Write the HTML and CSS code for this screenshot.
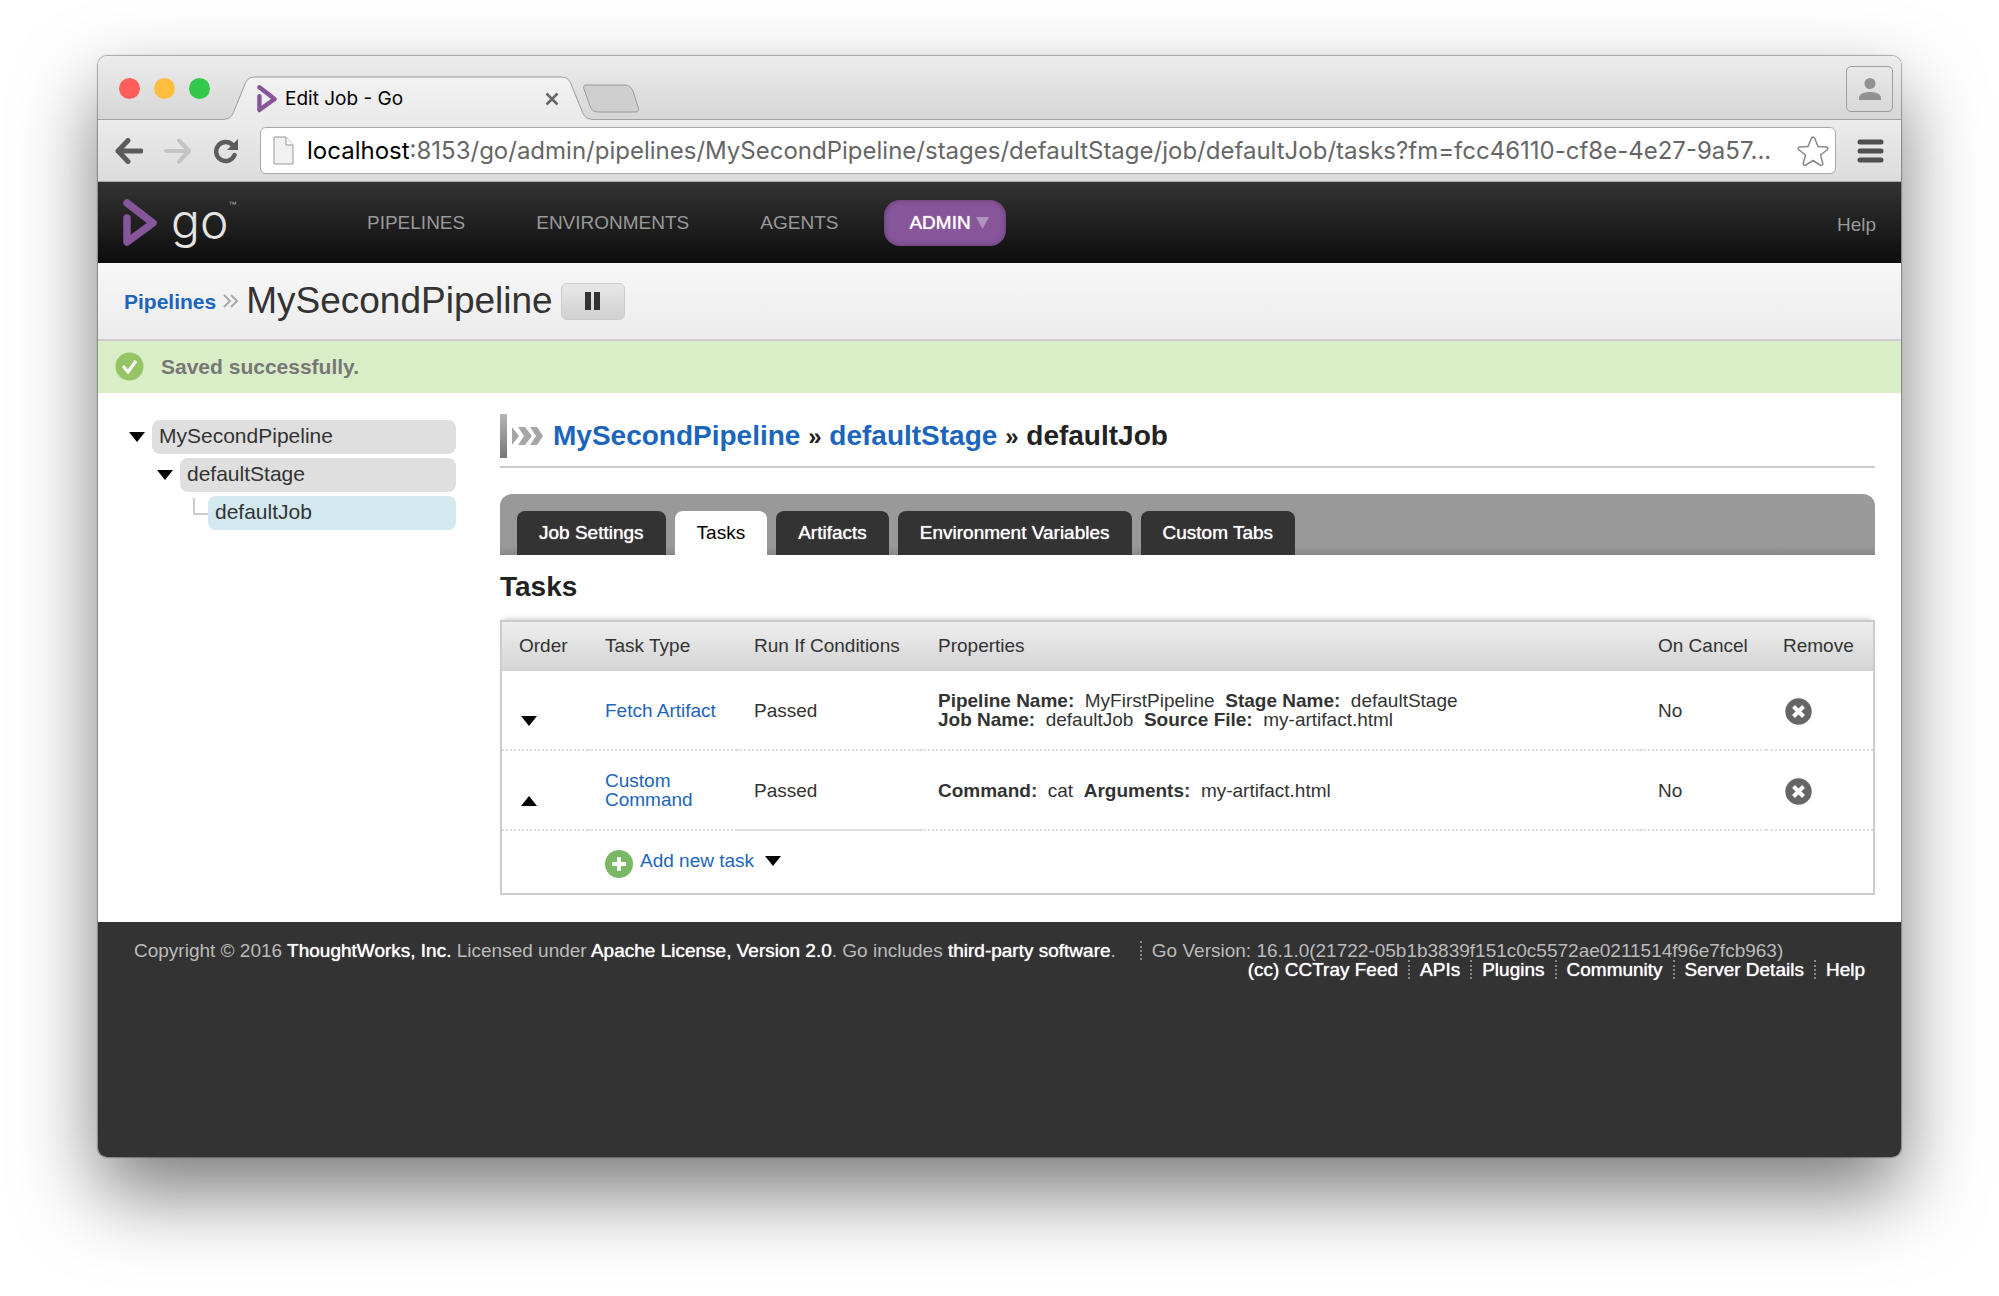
FILE: index.html
```html
<!DOCTYPE html>
<html lang="en">
<head>
<meta charset="utf-8">
<title>Edit Job - Go</title>
<link rel="stylesheet" href="styles.css">
</head>
<body>
<svg class="defs" aria-hidden="true">
  <defs>
    <symbol id="go-mark" viewBox="0 0 34 48"><path d="M4 4 30 24 4 43V19" fill="none" stroke="#87559a" stroke-width="7.500" stroke-linejoin="round" stroke-linecap="round"/></symbol>
    <symbol id="down" viewBox="0 0 16 10"><path d="M0 0h16L8 10z"/></symbol>
    <symbol id="up" viewBox="0 0 16 10"><path d="M0 10h16L8 0z"/></symbol>
    <symbol id="remove" viewBox="0 0 27 27"><circle cx="13.500" cy="13.500" r="13.200" fill="#666"/><path d="M8.500 8.500l10 10M18.500 8.500l-10 10" stroke="#fff" stroke-width="4"/></symbol>
  </defs>
</svg>
<div class="window">
  <div class="tabstrip">
    <div class="lights"><i class="light red"></i><i class="light amber"></i><i class="light green"></i></div>
    <div class="browser-tab">
      <svg class="tab-shape" viewBox="0 0 366 44"><defs><linearGradient id="tabfill" x2="0" y2="1"><stop stop-color="#f2f2f2"/><stop offset="1" stop-color="#eaeaea"/></linearGradient></defs><path d="M0 43c5 0 7-3 9-8L20 8c2-5 5-7 10-7h306c5 0 8 2 10 7l11 27c2 5 4 8 9 8v1H0z" fill="url(#tabfill)"/><path d="M0 43c5 0 7-3 9-8L20 8c2-5 5-7 10-7h306c5 0 8 2 10 7l11 27c2 5 4 8 9 8" fill="none" stroke="#9c9c9c"/></svg>
      <svg class="favicon"><use href="#go-mark"/></svg>
      <span class="tab-title">Edit Job - Go</span>
      <button class="plain tab-close" aria-label="Close tab"><svg width="14" height="14" viewBox="0 0 14 14"><path d="M1.500 1.500l11 11M12.500 1.500l-11 11" stroke="#666" stroke-width="2.500"/></svg></button>
    </div>
    <button class="plain new-tab" aria-label="New tab"><svg width="58" height="30" viewBox="0 0 58 30"><path d="M4 1h38c5 0 7 2 9 6l5 16c1 4 0 5-3 5H18c-6 0-8-1-10-6L2 5C1 2 2 1 4 1z" fill="#cfcfcf" stroke="#9a9a9a"/></svg></button>
    <button class="person" aria-label="Profile"><svg width="22" height="22" viewBox="0 0 22 22" fill="#929292"><circle cx="11" cy="5.500" r="5.500"/><path d="M0 22v-2c0-4 5-6 11-6s11 2 11 6v2z"/></svg></button>
  </div>
  <div class="toolbar">
    <button class="plain" aria-label="Back"><svg width="28" height="26" viewBox="0 0 28 26"><path d="M13 2.500 3 13l10 10.500M3 13h23" fill="none" stroke="#5c5c5c" stroke-width="5" stroke-linecap="round" stroke-linejoin="round"/></svg></button>
    <button class="plain" aria-label="Forward"><svg width="28" height="26" viewBox="0 0 28 26"><path d="M15 2.500 25 13 15 23.500M25 13H2" fill="none" stroke="#c4c4c4" stroke-width="4" stroke-linecap="round" stroke-linejoin="round"/></svg></button>
    <button class="plain" aria-label="Reload"><svg width="26" height="26" viewBox="0 0 26 26"><path d="M20 7.500A9.500 9.500 0 1 0 21.500 17" fill="none" stroke="#5c5c5c" stroke-width="4.500" stroke-linecap="round"/><path d="M25 1v11H14z" fill="#5c5c5c"/></svg></button>
    <div class="omnibox">
      <svg width="21" height="29" viewBox="0 0 21 29"><path d="M1 1h12l7 8v19H1z" fill="#f1f1f1" stroke="#999"/><path d="M13 1v8h7" fill="#fff" stroke="#999"/></svg>
      <label class="host" for="url">localhost</label><input id="url" class="url" type="text" value=":8153/go/admin/pipelines/MySecondPipeline/stages/defaultStage/job/defaultJob/tasks?fm=fcc46110-cf8e-4e27-9a57...">
      <button class="plain" aria-label="Bookmark"><svg width="32" height="30" viewBox="0 0 32 30"><path d="M16 1c1 0 1.500 1 2 2l3 7.500 8 .5c2 0 2.500 2 1 3l-6.500 5 2.200 8c.5 2-1 3-2.700 2L16 24.500 9 29c-1.700 1-3.200 0-2.700-2l2.200-8L2 14c-1.500-1-1-3 1-3l8-.5L14 3c.5-1 1-2 2-2z" fill="#fff" stroke="#888" stroke-width="1.500"/></svg></button>
    </div>
    <button class="plain menu" aria-label="Menu"><svg width="27" height="24" viewBox="0 0 27 24"><path d="M3 3h21M3 12h21M3 21h21" stroke="#4f4f4f" stroke-width="5" stroke-linecap="round"/></svg></button>
  </div>
  <header class="navbar">
    <a class="logo" href="#"><svg width="34" height="48"><use href="#go-mark"/></svg><span class="logo-word">go</span><sup class="tm">™</sup></a>
    <nav class="nav">
      <a href="#">PIPELINES</a><a href="#">ENVIRONMENTS</a><a href="#">AGENTS</a><a class="current" href="#">ADMIN<svg width="13" height="12" viewBox="0 0 13 12"><path d="M0 0h13L6.500 12z" fill="#b193bb"/></svg></a>
    </nav>
    <a class="help" href="#">Help</a>
  </header>
  <div class="pipeline-bar">
    <a class="crumb" href="#">Pipelines</a>
    <svg width="15" height="14" viewBox="0 0 15 14"><path d="M1 1l6 6-6 6M8 1l6 6-6 6" fill="none" stroke="#aaa" stroke-width="2"/></svg>
    <h1>MySecondPipeline</h1>
    <button class="pause" aria-label="Pause"><svg width="15" height="18" viewBox="0 0 15 18"><path d="M0 0h6v18H0zM9 0h6v18H9z" fill="#333"/></svg></button>
  </div>
  <div class="flash" role="status">
    <svg width="29" height="29" viewBox="0 0 29 29"><circle cx="14.500" cy="14.500" r="14" fill="#96c464"/><path d="M8 14l5 6 8-11" fill="none" stroke="#fff" stroke-width="3"/></svg>
    <span>Saved successfully.</span>
  </div>
  <main class="content">
    <aside class="tree">
      <div class="node"><svg class="arrow"><use href="#down"/></svg><a href="#">MySecondPipeline</a></div>
      <div class="node stage"><svg class="arrow"><use href="#down"/></svg><a href="#">defaultStage</a></div>
      <div class="node job"><i class="branch"></i><a class="selected" href="#">defaultJob</a></div>
    </aside>
    <section class="main">
      <div class="heading">
        <svg width="44" height="44" viewBox="0 0 44 44"><defs><linearGradient id="bar" x2="0" y2="1"><stop stop-color="#b5b5b5"/><stop offset="1" stop-color="#777"/></linearGradient></defs><path d="M0 0h7v44H0z" fill="url(#bar)"/><path d="M12 13l7 9-7 9zM18 13h7l7 9-7 9h-7l6-9zM30 13h7l6 9-6 9h-7l6-9z" fill="#a6a6a6"/></svg>
        <span><a href="#">MySecondPipeline</a> <small>»</small> <a href="#">defaultStage</a> <small>»</small> defaultJob</span>
      </div>
      <nav class="tabs">
        <a href="#">Job Settings</a><a class="active" href="#">Tasks</a><a href="#">Artifacts</a><a href="#">Environment Variables</a><a href="#">Custom Tabs</a>
      </nav>
      <h2>Tasks</h2>
      <table class="tasks">
        <colgroup><col class="c-order"><col class="c-type"><col class="c-run"><col><col class="c-cancel"><col class="c-remove"></colgroup>
        <thead><tr><th>Order</th><th>Task Type</th><th>Run If Conditions</th><th>Properties</th><th>On Cancel</th><th>Remove</th></tr></thead>
        <tbody>
          <tr>
            <td class="order"><button class="plain" aria-label="Move down"><svg class="arrow"><use href="#down"/></svg></button></td>
            <td><a href="#">Fetch Artifact</a></td><td>Passed</td>
            <td><b>Pipeline Name:</b>&nbsp; MyFirstPipeline&nbsp; <b>Stage Name:</b>&nbsp; defaultStage<br><b>Job Name:</b>&nbsp; defaultJob&nbsp; <b>Source File:</b>&nbsp; my-artifact.html</td>
            <td>No</td><td class="remove"><button class="plain" aria-label="Remove"><svg width="27" height="27"><use href="#remove"/></svg></button></td>
          </tr>
          <tr>
            <td class="order"><button class="plain" aria-label="Move up"><svg class="arrow"><use href="#up"/></svg></button></td>
            <td><a href="#">Custom Command</a></td><td class="solid">Passed</td>
            <td><b>Command:</b>&nbsp; cat&nbsp; <b>Arguments:</b>&nbsp; my-artifact.html</td>
            <td>No</td><td class="remove"><button class="plain" aria-label="Remove"><svg width="27" height="27"><use href="#remove"/></svg></button></td>
          </tr>
          <tr class="add">
            <td></td>
            <td colspan="5"><a class="add-link" href="#"><svg width="28" height="28" viewBox="0 0 28 28"><circle cx="14" cy="14" r="14" fill="#79b865"/><path d="M14 7v14M7 14h14" stroke="#fff" stroke-width="4"/></svg><span class="add-label">Add new task<svg class="arrow"><use href="#down"/></svg></span></a></td>
          </tr>
        </tbody>
      </table>
    </section>
  </main>
  <footer class="footer">
    <div class="line copyright"><span>Copyright © 2016 <a href="#">ThoughtWorks, Inc.</a> Licensed under <a href="#">Apache License, Version 2.0</a>. Go includes <a href="#">third-party software</a>.</span><span>Go Version: 16.1.0(21722-05b1b3839f151c0c5572ae0211514f96e7fcb963)</span></div>
    <div class="line links"><a href="#">(cc) CCTray Feed</a><a href="#">APIs</a><a href="#">Plugins</a><a href="#">Community</a><a href="#">Server Details</a><a href="#">Help</a></div>
  </footer>
</div>
</body>
</html>
```
FILE: styles.css
```css
* { box-sizing: border-box; }
body {
  margin: 0;
  padding: 56px 98px 139px;
  background: #fff;
  color: #333;
  font: 19px/19px "Liberation Sans", Arial, sans-serif;
}
svg { display: block; flex: none; }
a { color: #1c65bd; text-decoration: none; }
.defs { position: absolute; width: 0; height: 0; }
.plain { display: block; flex: none; padding: 0; border: 0; background: none; }
.arrow { width: 16px; height: 10px; fill: #000; }

.window {
  display: flex;
  flex-direction: column;
  min-height: calc(100vh - 195px);
  border-radius: 9px;
  overflow: hidden;
  background: #fff;
  box-shadow: 0 0 1px 1px rgba(0, 0, 0, .3), 0 36px 80px rgba(0, 0, 0, .52);
}

/* Browser chrome */
.tabstrip {
  display: flex;
  align-items: flex-end;
  height: 64px;
  padding-left: 21px;
  border-bottom: 1px solid #a0a0a0;
  background: linear-gradient(#ececec, #d6d6d6);
}
.lights { display: flex; gap: 14px; align-self: center; width: 106px; padding-top: 2px; }
.light { width: 21px; height: 21px; border-radius: 50%; }
.red { background: #fe5f5a; }
.amber { background: #febd3e; }
.green { background: #32c94a; }
.browser-tab {
  display: flex;
  align-items: center;
  position: relative;
  width: 366px;
  height: 44px;
  margin-bottom: -1px;
  padding: 2px 32px 0;
  font: 19px/24px Inter, sans-serif;
  color: #000;
}
.tab-shape { position: absolute; left: 0; top: 0; width: 366px; height: 44px; }
.favicon { position: relative; width: 20px; height: 28px; margin-right: 8px; }
.tab-title { position: relative; flex: 1; }
.tab-close { position: relative; }
.new-tab { margin: 0 auto 5px -9px; }
.person {
  display: grid;
  place-items: center;
  width: 47px;
  height: 46px;
  margin: 0 8px 7px 0;
  padding: 0;
  border: 1px solid #9d9d9d;
  border-radius: 5px;
  background: transparent;
}
.toolbar {
  display: flex;
  align-items: center;
  gap: 21px;
  height: 62px;
  padding: 0 17px;
  border-bottom: 1px solid #aaa;
  background: linear-gradient(#ebebeb, #dcdcdc);
}
.omnibox {
  display: flex;
  align-items: center;
  flex: 1;
  min-width: 0;
  height: 47px;
  padding: 0 6px 0 12px;
  border: 1px solid #a8a8a8;
  border-radius: 6px;
  background: #fff;
  font: 24px/32px Inter, sans-serif;
}
.host { margin-left: 13px; color: #000; }
.url { flex: 1; min-width: 0; padding: 0; border: 0; outline: 0; background: none; color: #666; font: inherit; }

/* Site navigation */
.navbar {
  display: flex;
  align-items: center;
  height: 81px;
  padding: 0 25px;
  background: linear-gradient(#333, #0d0d0d);
}
.logo { display: flex; align-items: center; width: 199px; color: #e4e4e4; }
.logo-word { margin-left: 14px; padding-bottom: 4px; font: 300 48px/48px Inter, sans-serif; }
.tm { align-self: flex-start; font-size: 8px; line-height: 16px; color: #aaa; }
.nav { display: flex; align-items: center; flex: 1; }
.nav a { padding: 14px 0; margin-left: 71px; line-height: 18px; color: #999; }
.nav a:first-child { margin-left: 45px; }
.nav .current {
  display: flex;
  align-items: center;
  gap: 5px;
  margin-left: 46px;
  padding: 14px 17px 14px 25px;
  border-radius: 16px;
  background: #87559a;
  box-shadow: inset 0 0 5px #5f3a6e;
  color: #fff;
  text-shadow: 0 0 1px #fff;
}
.help { padding-top: 4px; color: #999; }

.pipeline-bar {
  display: flex;
  align-items: center;
  height: 78px;
  padding: 0 26px;
  border-bottom: 2px solid #ccc;
  background: linear-gradient(#f7f7f7, #ececec);
}
.crumb { margin-right: 7px; font-size: 21px; font-weight: bold; }
h1 { margin: 0 8px; font-size: 37px; line-height: 44px; font-weight: normal; }
.pause {
  display: grid;
  place-items: center;
  width: 64px;
  height: 37px;
  padding: 0;
  border: 1px solid #ccc;
  border-radius: 6px;
  background: linear-gradient(#e8e8e8, #d0d0d0);
}
.flash {
  display: flex;
  align-items: center;
  gap: 17px;
  height: 52px;
  padding: 0 17px 2px;
  background: #d9eec7;
  color: #777;
  font-size: 21px;
  font-weight: bold;
}

/* Content */
.content { display: flex; padding: 21px 26px 27px 31px; }
.tree { width: 327px; flex: none; margin-right: 44px; padding-top: 6px; font-size: 21px; }
.node { display: flex; align-items: center; margin-bottom: 4px; }
.stage { padding-left: 28px; }
.job { padding-left: 64px; }
.node .arrow { margin-right: 7px; }
.node a { flex: 1; padding: 4px 7px 6px; border-radius: 8px; background: #dfdfdf; color: #333; line-height: 24px; }
.node .selected { background: #d1e9ef; }
.branch { width: 15px; height: 17px; margin-bottom: 14px; border: solid #ccc; border-width: 0 0 2px 2px; }
.main { flex: 1; min-width: 0; }
.heading {
  display: flex;
  align-items: center;
  gap: 9px;
  padding-bottom: 8px;
  border-bottom: 2px solid #ccc;
  color: #222;
  font-size: 28px;
  line-height: 32px;
  font-weight: bold;
}
.heading small { font-size: 24px; }
.tabs {
  display: flex;
  gap: 9px;
  margin-top: 26px;
  padding: 17px 17px 0;
  border-radius: 12px 12px 0 0;
  background: linear-gradient(#999 85%, #888);
}
.tabs a {
  padding: 12px 22px;
  border-radius: 8px 8px 0 0;
  background: #333;
  color: #fff;
  line-height: 20px;
  text-shadow: 0 0 1px #fff;
}
.tabs .active { background: #fff; color: #000; text-shadow: none; }
h2 { margin: 16px 0 17px; color: #222; font-size: 28px; line-height: 32px; }
.tasks {
  width: 100%;
  table-layout: fixed;
  border: 2px solid #ccc;
  border-spacing: 0;
  box-shadow: 0 -4px 5px -3px #ccc;
}
.c-order { width: 86px; }
.c-type { width: 149px; }
.c-run { width: 184px; }
.c-cancel { width: 125px; }
.c-remove { width: 107px; }
th { height: 49px; padding: 0 17px 3px; background: linear-gradient(#eee, #d4d4d4); text-align: left; font-weight: normal; }
td { height: 80px; padding: 0 17px; border-bottom: 2px dotted #ddd; }
.solid { border-bottom-style: solid; }
.order .plain { padding-top: 22px; margin-left: 2px; }
.remove .plain { padding-top: 3px; margin-left: 2px; }
.add td { height: 62px; border: 0; }
.add-link { display: flex; align-items: center; gap: 7px; padding-top: 3px; }
.add-label { display: flex; align-items: center; gap: 11px; padding-bottom: 6px; }

.footer { flex: 1; padding: 19px 36px; background: #333; color: #bbb; }
.footer a { color: #fff; text-shadow: 0 0 1px #fff; }
.line { display: flex; }
.line > * + * { margin-left: 10px; padding-left: 10px; border-left: 2px dotted #888; }
.copyright > * + * { margin-left: 24px; }
.links { justify-content: flex-end; }
```
